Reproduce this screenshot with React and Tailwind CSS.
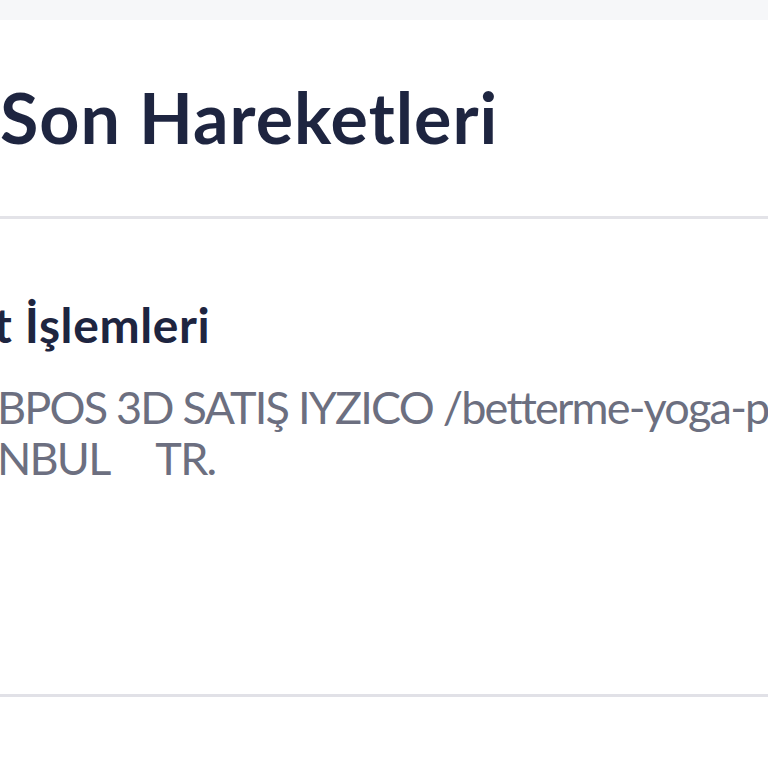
// Hesap hareketleri detay ekranı (kırpılmış görünüm)
export default function App() {
  return (
    <div
      className="h-[768px] w-[768px] overflow-hidden bg-white"
      style={{ fontFamily: "Lato, 'Noto Sans', sans-serif" }}
    >
      <div className="h-[20px] bg-[#f6f7f9]" />

      <header className="h-[196px] pt-[62px]">
        <h1 className="whitespace-nowrap text-[70px] font-bold leading-[70px] tracking-[1px] text-[#1e2540]">
          Son Hareketleri
        </h1>
      </header>

      <div className="h-[3px] bg-[#e3e3e8]" />

      <section className="h-[475px] overflow-hidden pt-[82px]">
        <h2 className="-ml-[6px] whitespace-nowrap text-[48px] font-bold leading-[48px] tracking-[0.6px] text-[#1e2540]">
          t İşlemleri
        </h2>
        <div className="mt-[33px] text-[45px] leading-[51px] tracking-[-1.8px] text-[#6c6f80]">
          <p className="-ml-[3px] whitespace-nowrap">BPOS 3D SATIŞ IYZICO /betterme-yoga-plan</p>
          <p className="-ml-[3px] whitespace-pre">NBUL     TR.</p>
        </div>
      </section>

      <div className="h-[3px] bg-[#e1e1e7]" />
    </div>
  );
}
